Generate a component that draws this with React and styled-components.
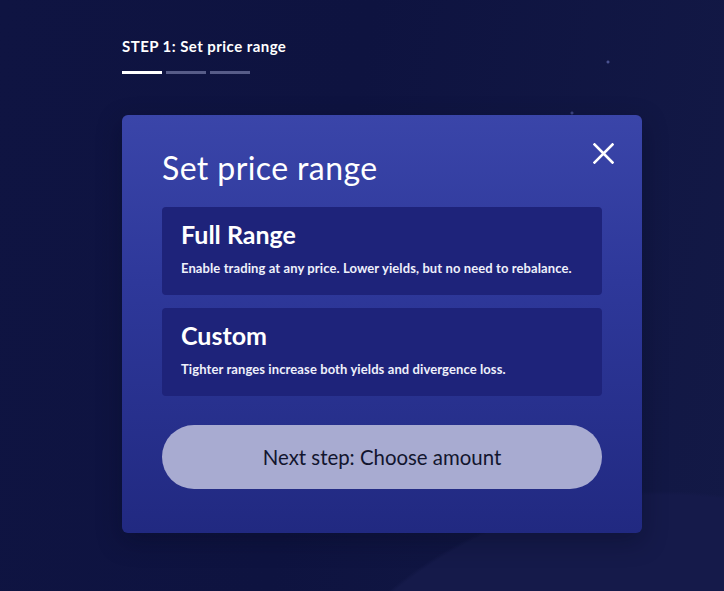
import React from "react";
import styled, { createGlobalStyle } from "styled-components";

const GlobalStyle = createGlobalStyle`
  html, body { margin: 0; padding: 0; }
  body {
    font-family: Lato, "Noto Sans", sans-serif;
    background: #0d1238;
  }
  * { box-sizing: border-box; }
`;

const Page = styled.div`
  position: relative;
  min-height: 591px;
  overflow: hidden;
  padding: 37px 0 0 122px;
  background:
    radial-gradient(circle at 608px 62px, #4a5290 0 1.2px, transparent 1.8px),
    radial-gradient(circle at 572px 113px, #3c4582 0 1.2px, transparent 1.8px),
    radial-gradient(circle at 664px 921px, #151a4a 0 426px, transparent 430px),
    linear-gradient(100deg, #0f1442 0%, #0e1340 45%, #131946 100%);
`;

const StepLabel = styled.div`
  color: #ffffff;
  font-weight: 700;
  font-size: 15px;
  line-height: 18px;
  letter-spacing: 0.45px;
`;

const Progress = styled.div`
  display: flex;
  gap: 4px;
  margin-top: 16px;
`;

const Segment = styled.div`
  width: 40px;
  height: 3px;
  background: ${(p) => (p.$active ? "#ffffff" : "#575c88")};
`;

const Card = styled.div`
  position: relative;
  width: 520px;
  margin-top: 41px;
  padding: 35px 40px 44px;
  border-radius: 6px;
  background: linear-gradient(180deg, #3a45a9 0%, #2e389a 40%, #212981 100%);
  box-shadow: 0 8px 24px rgba(5, 8, 30, 0.35);
`;

const Title = styled.h1`
  margin: 0;
  color: #ffffff;
  font-weight: 400;
  font-size: 32px;
  line-height: 36px;
  letter-spacing: 0.4px;
`;

const CloseButton = styled.button`
  position: absolute;
  top: 27px;
  right: 28px;
  width: 22px;
  height: 22px;
  padding: 0;
  border: none;
  background: none;
  cursor: pointer;
  display: flex;
  align-items: center;
  justify-content: center;
`;

const Options = styled.div`
  display: flex;
  flex-direction: column;
  gap: 13px;
  margin-top: 21px;
`;

const Option = styled.div`
  height: 88px;
  padding: 13px 19px 0;
  border-radius: 4px;
  background: #1e237a;
  color: #ffffff;
  cursor: pointer;
`;

const OptionTitle = styled.div`
  font-weight: 700;
  font-size: 25px;
  line-height: 29px;
`;

const OptionText = styled.div`
  margin-top: 12px;
  font-weight: 700;
  font-size: 13px;
  line-height: 15px;
  letter-spacing: 0.1px;
  color: #eef0fb;
`;

const NextButton = styled.button`
  display: block;
  width: 100%;
  height: 64px;
  margin-top: 29px;
  border: none;
  border-radius: 32px;
  background: #a8abd1;
  color: #12152e;
  font-family: Lato, "Noto Sans", sans-serif;
  font-size: 20.4px;
  font-weight: 400;
  cursor: pointer;
`;

export default function App() {
  return (
    <>
      <GlobalStyle />
      <Page>
        <StepLabel>STEP 1: Set price range</StepLabel>
        <Progress>
          <Segment $active />
          <Segment />
          <Segment />
        </Progress>
        <Card>
          <Title>Set price range</Title>
          <CloseButton aria-label="Close">
            <svg width="21" height="21" viewBox="0 0 21 21">
              <path d="M1.5 1.5 L19.5 19.5 M19.5 1.5 L1.5 19.5" stroke="#fff" strokeWidth="2.6" strokeLinecap="square" />
            </svg>
          </CloseButton>
          <Options>
            <Option>
              <OptionTitle>Full Range</OptionTitle>
              <OptionText>Enable trading at any price. Lower yields, but no need to rebalance.</OptionText>
            </Option>
            <Option>
              <OptionTitle>Custom</OptionTitle>
              <OptionText>Tighter ranges increase both yields and divergence loss.</OptionText>
            </Option>
          </Options>
          <NextButton>Next step: Choose amount</NextButton>
        </Card>
      </Page>
    </>
  );
}
